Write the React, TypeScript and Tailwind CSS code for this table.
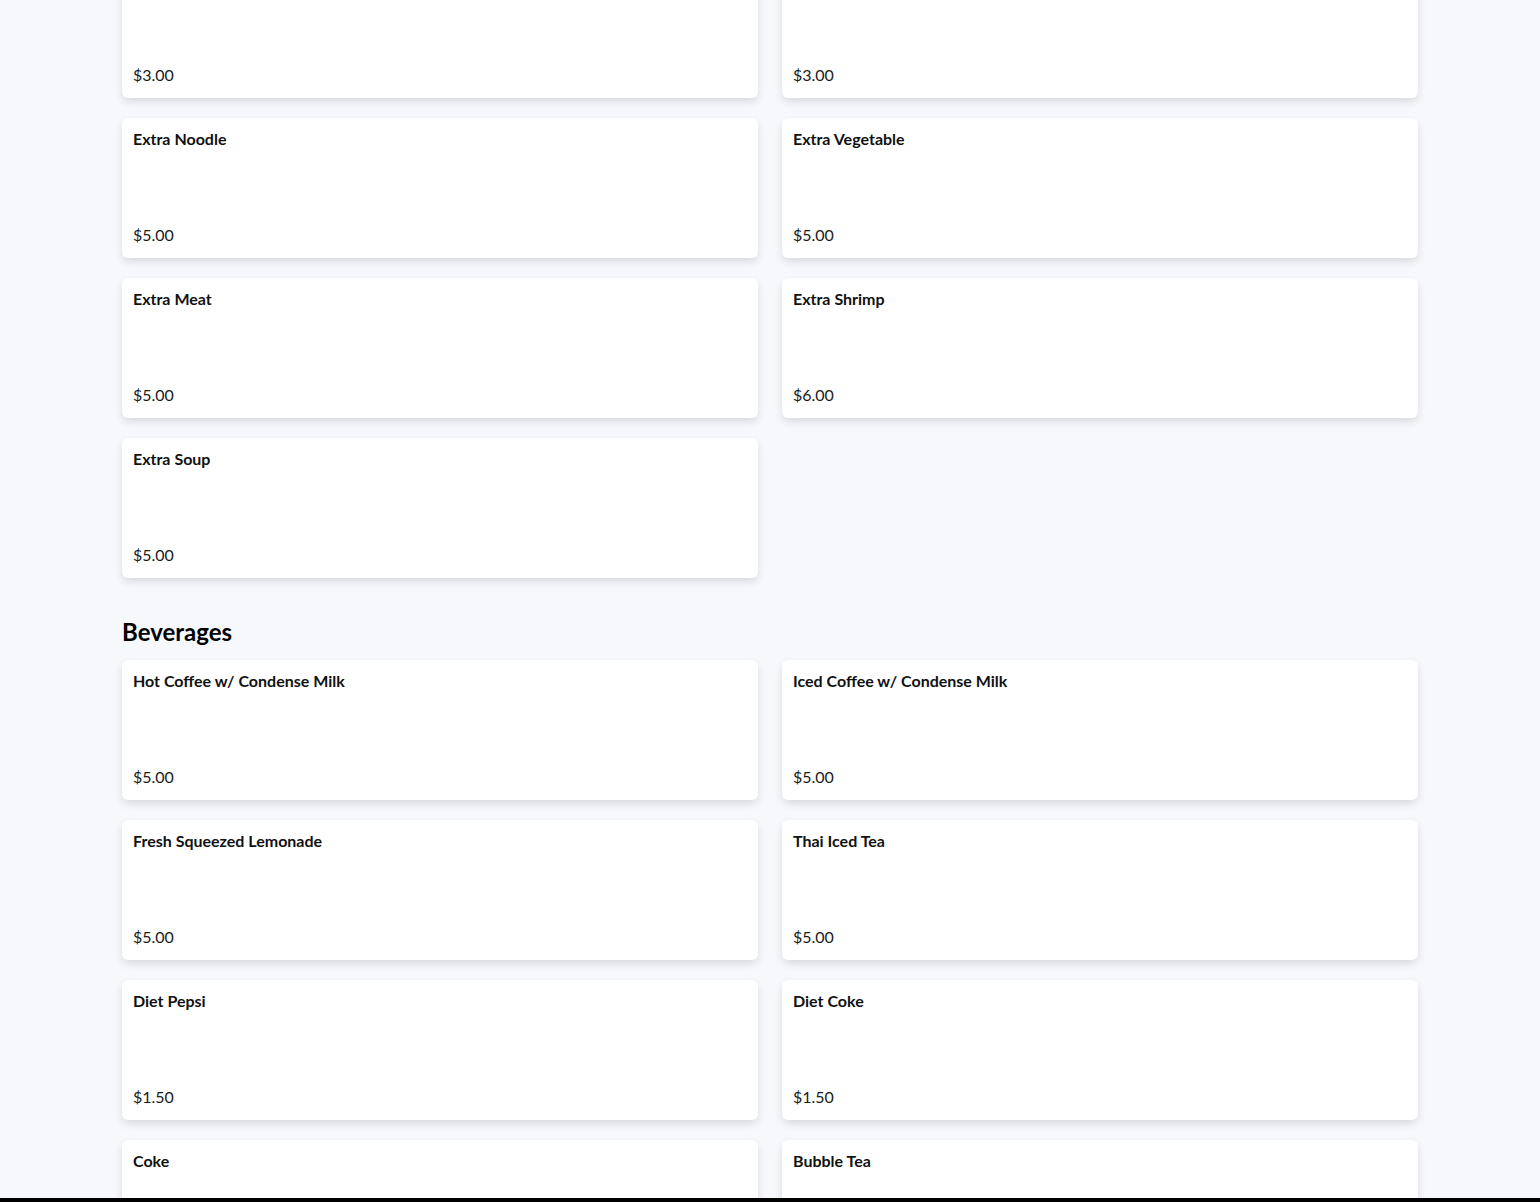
import React from 'react';

interface MenuItem {
  name: string;
  price: string;
}

interface Section {
  title?: string;
  items: MenuItem[];
}

// first row is scrolled past the top of the viewport, names not visible
const sections: Section[] = [
  {
    items: [
      { name: '', price: '$3.00' },
      { name: '', price: '$3.00' },
      { name: 'Extra Noodle', price: '$5.00' },
      { name: 'Extra Vegetable', price: '$5.00' },
      { name: 'Extra Meat', price: '$5.00' },
      { name: 'Extra Shrimp', price: '$6.00' },
      { name: 'Extra Soup', price: '$5.00' },
    ],
  },
  {
    title: 'Beverages',
    items: [
      { name: 'Hot Coffee w/ Condense Milk', price: '$5.00' },
      { name: 'Iced Coffee w/ Condense Milk', price: '$5.00' },
      { name: 'Fresh Squeezed Lemonade', price: '$5.00' },
      { name: 'Thai Iced Tea', price: '$5.00' },
      { name: 'Diet Pepsi', price: '$1.50' },
      { name: 'Diet Coke', price: '$1.50' },
      { name: 'Coke', price: '' },
      { name: 'Bubble Tea', price: '' },
    ],
  },
];

function ItemCard({ item }: { item: MenuItem }) {
  return (
    <div className="h-[140px] bg-white rounded-md shadow-[0_4px_10px_-1px_rgba(0,0,0,0.14)] px-[11px] pt-[11px] pb-[13px] flex flex-col justify-between">
      <div className="text-base leading-5 font-bold text-[#111]">{item.name}</div>
      <div className="text-base leading-5 text-[#1a1a1a]">{item.price}</div>
    </div>
  );
}

export default function App() {
  return (
    <div className="h-[1202px] overflow-hidden bg-[#f7f8fb] font-['Lato','Liberation_Sans',sans-serif]">
      <div className="max-w-[1296px] mx-auto -mt-[42px]">
        {sections.map((section, i) => (
          <div key={i} className={i > 0 ? 'mt-[38px]' : ''}>
            {section.title && (
              <h2 className="text-2xl leading-8 font-bold text-black mb-3">{section.title}</h2>
            )}
            <div className="grid grid-cols-2 gap-x-6 gap-y-5">
              {section.items.map((item, j) => (
                <ItemCard key={j} item={item} />
              ))}
            </div>
          </div>
        ))}
      </div>
      {/* cart bar peeking in at the bottom */}
      <div className="fixed bottom-0 left-0 right-0 h-1 bg-black" />
    </div>
  );
}
